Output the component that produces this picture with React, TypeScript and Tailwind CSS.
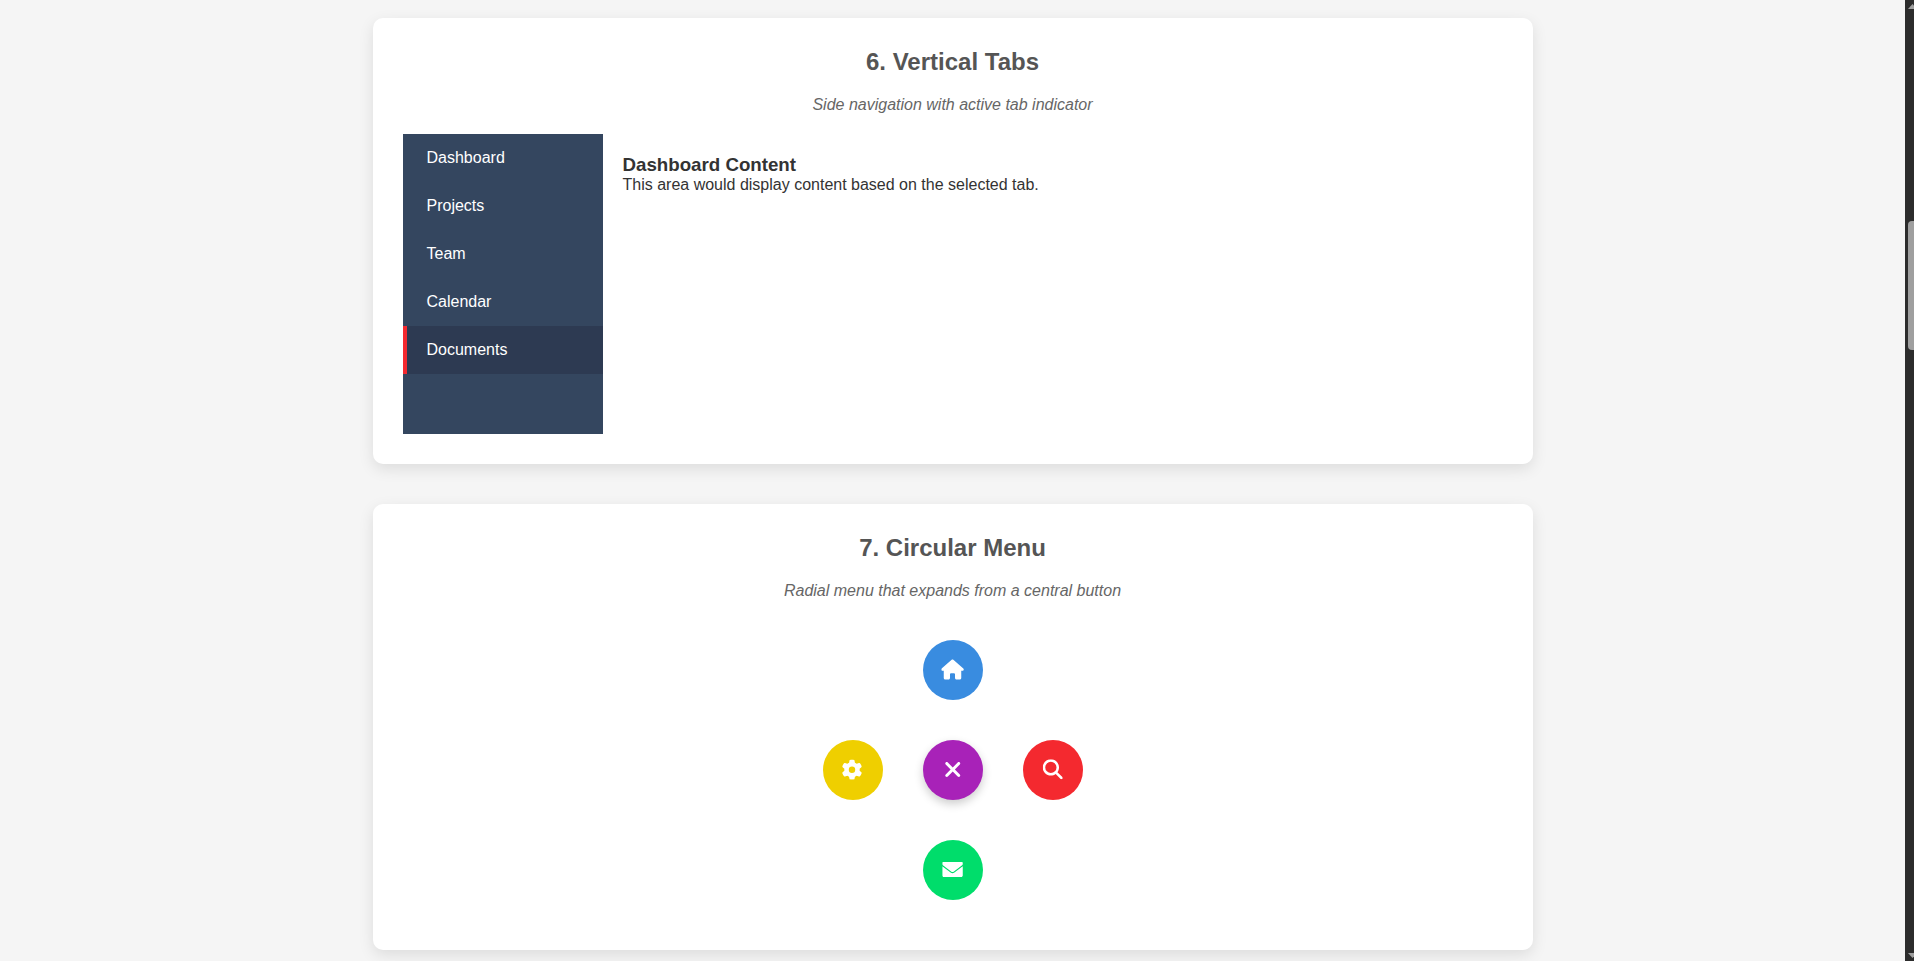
import type { ReactNode } from 'react';
import { FaGear, FaHouse, FaMagnifyingGlass, FaXmark } from 'react-icons/fa6';

const tabs = ['Dashboard', 'Projects', 'Team', 'Calendar', 'Documents'];

function DemoCard({ title, description, children }: { title: string; description: string; children: ReactNode }) {
  return (
    <section className="rounded-[10px] bg-white p-[30px] shadow-[0_5px_15px_rgba(0,0,0,0.1)]">
      <h2 className="mb-5 text-center text-2xl leading-[28px] font-bold text-[#555]">{title}</h2>
      <p className="mb-5 text-center leading-[18px] text-[#666] italic">{description}</p>
      {children}
    </section>
  );
}

function VerticalTabs({ active }: { active: string }) {
  return (
    <div className="flex h-[300px]">
      <ul className="w-[200px] shrink-0 bg-[#34465f] text-white">
        {tabs.map((tab) => (
          <li
            key={tab}
            className={
              tab === active
                ? 'border-l-4 border-[#f4292f] bg-[#2d3a52] px-5 py-[15px] leading-[18px]'
                : 'border-l-4 border-transparent px-5 py-[15px] leading-[18px]'
            }
          >
            {tab}
          </li>
        ))}
      </ul>
      <div className="flex-1 p-5">
        <h3 className="text-[18.72px] leading-[22px] font-bold">Dashboard Content</h3>
        <p className="leading-[18px]">This area would display content based on the selected tab.</p>
      </div>
    </div>
  );
}

function EnvelopeIcon() {
  return (
    <svg className="h-5 w-[20.5px] translate-x-[0.25px] -translate-y-[0.5px]" viewBox="0 0 512 512" preserveAspectRatio="none" fill="currentColor">
      <path d="M256 352c-16.53 0-33.06-5.422-47.16-16.41L0 173.2V408C0 430 18 448 40 448h432c22 0 40-18 40-40V173.2l-208.8 162.5C289.1 346.6 272.5 352 256 352z" />
      <path d="M16.29 145.3l212.2 165.1c16.19 12.6 38.87 12.6 55.06 0l212.2-165.1C505.1 137.3 512 125 512 112V88C512 75 501 64 488 64H24C11 64 0 75 0 88V112C0 125 6.01 137.3 16.29 145.3z" />
    </svg>
  );
}

function CircularMenu() {
  return (
    <div className="grid h-[300px] grid-cols-[60px_60px_60px] grid-rows-[60px_60px_60px] content-center justify-center gap-10 text-xl text-white">
      <button className="col-start-2 flex items-center justify-center rounded-full bg-[#398ce0]" aria-label="Home">
        <FaHouse className="size-[22.5px] translate-x-[0.25px] -translate-y-[0.75px]" />
      </button>
      <button className="col-start-1 row-start-2 flex items-center justify-center rounded-full bg-[#efcf00]" aria-label="Settings">
        <FaGear className="size-[20.5px] -translate-x-[0.25px] -translate-y-[0.5px]" />
      </button>
      <button
        className="row-start-2 flex items-center justify-center rounded-full bg-[#a822b8] text-2xl shadow-[0_4px_10px_rgba(0,0,0,0.2)]"
        aria-label="Close"
      >
        <FaXmark className="-translate-x-[0.25px] -translate-y-[0.5px]" />
      </button>
      <button className="row-start-2 flex items-center justify-center rounded-full bg-[#f4292f]" aria-label="Search">
        <FaMagnifyingGlass className="-translate-x-[0.25px] -translate-y-[0.75px]" />
      </button>
      <button className="col-start-2 row-start-3 flex items-center justify-center rounded-full bg-[#00dd6b]" aria-label="Mail">
        <EnvelopeIcon />
      </button>
    </div>
  );
}

function Scrollbar() {
  return (
    <div className="flex w-[9px] shrink-0 flex-col overflow-hidden bg-[#2c2c2c]">
      <svg className="h-[221px] w-[9px]" viewBox="0 0 9 221" fill="#9f9f9f">
        <path d="M3 9 L7.5 4 L9 5.5 V9 Z" />
      </svg>
      <div className="ml-[3px] h-[129px] w-3 rounded-[4px] bg-[#9f9f9f]" />
      <svg className="mt-auto h-[12px] w-[9px]" viewBox="0 0 9 12" fill="#9f9f9f">
        <path d="M3 4 H9 V7.5 L7.5 9 Z" />
      </svg>
    </div>
  );
}

export default function App() {
  return (
    <div className="flex h-[961px] w-[1914px] overflow-hidden bg-[#f5f5f5] font-['Liberation_Sans',Arial,sans-serif] text-base text-[#333]">
      <main className="flex flex-1 justify-center pt-[18px]">
        <div className="flex w-[1160px] flex-col gap-10">
          <DemoCard title="6. Vertical Tabs" description="Side navigation with active tab indicator">
            <VerticalTabs active="Documents" />
          </DemoCard>
          <DemoCard title="7. Circular Menu" description="Radial menu that expands from a central button">
            <CircularMenu />
          </DemoCard>
        </div>
      </main>
      <Scrollbar />
    </div>
  );
}
